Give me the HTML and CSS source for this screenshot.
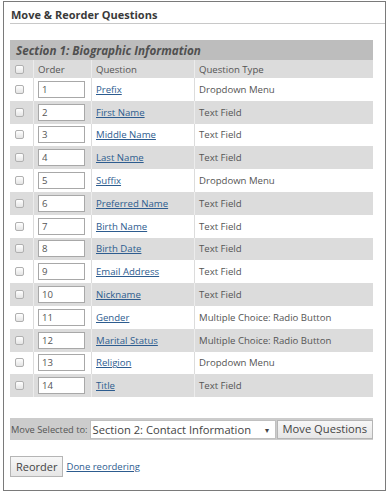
FILE: index.html
```html
<!DOCTYPE html>
<html lang="en">
<head>
  <meta charset="UTF-8" />
  <title>Move &amp; Reorder Questions</title>
  <link rel="stylesheet" href="styles.css">
</head>
<body>
  <div class="panel">
    <h2 class="panel-title">Move &amp; Reorder Questions</h2>
    <table class="q-table">
      <thead>
        <tr class="section-row"><th colspan="4">Section 1: Biographic Information</th></tr>
        <tr class="head-row">
          <th class="col-check"><input type="checkbox" class="cb" /></th>
          <th class="col-order">Order</th>
          <th class="col-question">Question</th>
          <th>Question Type</th>
        </tr>
      </thead>
      <tbody>
        <tr><td class="col-check"><input type="checkbox" class="cb" /></td><td><input class="order-input" value="1" /></td><td><a href="#">Prefix</a></td><td>Dropdown Menu</td></tr>
        <tr><td class="col-check"><input type="checkbox" class="cb" /></td><td><input class="order-input" value="2" /></td><td><a href="#">First Name</a></td><td>Text Field</td></tr>
        <tr><td class="col-check"><input type="checkbox" class="cb" /></td><td><input class="order-input" value="3" /></td><td><a href="#">Middle Name</a></td><td>Text Field</td></tr>
        <tr><td class="col-check"><input type="checkbox" class="cb" /></td><td><input class="order-input" value="4" /></td><td><a href="#">Last Name</a></td><td>Text Field</td></tr>
        <tr><td class="col-check"><input type="checkbox" class="cb" /></td><td><input class="order-input" value="5" /></td><td><a href="#">Suffix</a></td><td>Dropdown Menu</td></tr>
        <tr><td class="col-check"><input type="checkbox" class="cb" /></td><td><input class="order-input" value="6" /></td><td><a href="#">Preferred Name</a></td><td>Text Field</td></tr>
        <tr><td class="col-check"><input type="checkbox" class="cb" /></td><td><input class="order-input" value="7" /></td><td><a href="#">Birth Name</a></td><td>Text Field</td></tr>
        <tr><td class="col-check"><input type="checkbox" class="cb" /></td><td><input class="order-input" value="8" /></td><td><a href="#">Birth Date</a></td><td>Text Field</td></tr>
        <tr><td class="col-check"><input type="checkbox" class="cb" /></td><td><input class="order-input" value="9" /></td><td><a href="#">Email Address</a></td><td>Text Field</td></tr>
        <tr><td class="col-check"><input type="checkbox" class="cb" /></td><td><input class="order-input" value="10" /></td><td><a href="#">Nickname</a></td><td>Text Field</td></tr>
        <tr><td class="col-check"><input type="checkbox" class="cb" /></td><td><input class="order-input" value="11" /></td><td><a href="#">Gender</a></td><td>Multiple Choice: Radio Button</td></tr>
        <tr><td class="col-check"><input type="checkbox" class="cb" /></td><td><input class="order-input" value="12" /></td><td><a href="#">Marital Status</a></td><td>Multiple Choice: Radio Button</td></tr>
        <tr><td class="col-check"><input type="checkbox" class="cb" /></td><td><input class="order-input" value="13" /></td><td><a href="#">Religion</a></td><td>Dropdown Menu</td></tr>
        <tr><td class="col-check"><input type="checkbox" class="cb" /></td><td><input class="order-input" value="14" /></td><td><a href="#">Title</a></td><td>Text Field</td></tr>
      </tbody>
    </table>

    <div class="move-bar">
      <span class="move-label">Move Selected to:</span>
      <div class="select-box">
        <span>Section 2: Contact Information</span>
        <span class="select-arrow">&#9662;</span>
      </div>
      <button class="btn move-btn">Move Questions</button>
    </div>

    <div class="footer">
      <button class="btn reorder-btn">Reorder</button>
      <a href="#" class="done-link">Done reordering</a>
    </div>
  </div>
</body>
</html>
```

FILE: styles.css
```css
body {
  margin: 0;
  background: #ffffff;
  font-family: "Open Sans", "Liberation Sans", sans-serif;
  color: #555555;
}
.panel {
  margin: 1px 0 0 3px;
  width: 383px;
  height: 490px;
  border: 1px solid #7a7a7a;
  padding-left: 6px;
  box-sizing: border-box;
}
.panel-title {
  margin: 0;
  padding: 6px 0 2px 1px;
  font-size: 11px;
  font-weight: 700;
  color: #3a3a3a;
  border-bottom: 1px solid #c8c8c8;
  line-height: 13px;
}
.q-table {
  margin-top: 16px;
  width: 363px;
  border-collapse: collapse;
  font-size: 9.6px;
}
.q-table th,
.q-table td {
  text-align: left;
  padding: 0 0 0 4px;
  height: 22.8px;
  border-left: 1px solid #dcdcdc;
  font-weight: 400;
}
.q-table tbody tr:nth-child(even) td {
  background: #dcdcdc;
  border-left-color: #ececec;
}
.section-row th {
  background: #bdbdbd;
  height: 20px;
  font-size: 11.7px;
  font-weight: 700;
  font-style: italic;
  color: #505050;
  padding-left: 6px;
  border-left: none;
}
.head-row th {
  background: #dcdcdc;
  height: 18px;
  border-left-color: #ececec;
}
.q-table .col-check {
  width: 18px;
  border-left: none;
  padding-left: 5px;
}
.col-order {
  width: 53px;
}
.col-question {
  width: 98px;
}
.cb {
  appearance: none;
  display: block;
  margin: 0;
  width: 9px;
  height: 9px;
  border: 1px solid #b0b0b0;
  border-radius: 2px;
  background: linear-gradient(#ffffff, #e4e4e4);
}
.order-input {
  display: block;
  width: 47px;
  height: 17px;
  box-sizing: border-box;
  border: 1px solid #a8a8a8;
  padding: 0 3px;
  font-family: inherit;
  font-size: 9.6px;
  color: #555555;
}
.q-table a {
  color: #2d5c8f;
}
.move-bar {
  margin-top: 21px;
  width: 363px;
  height: 22px;
  background: #cccccc;
  display: flex;
  align-items: center;
  box-sizing: border-box;
}
.move-label {
  font-size: 9.3px;
  color: #555555;
  padding-left: 1px;
  white-space: nowrap;
}
.select-box {
  margin-left: 2px;
  width: 186px;
  height: 19px;
  background: #ffffff;
  border: 1px solid #c0c0c0;
  box-sizing: border-box;
  display: flex;
  align-items: center;
  justify-content: space-between;
  padding: 0 6px 0 2px;
  font-size: 11.2px;
  color: #444444;
  white-space: nowrap;
}
.select-arrow {
  font-size: 8px;
}
.btn {
  font-family: inherit;
  background: linear-gradient(#f7f7f7, #e6e6e6);
  border: 1px solid #b5b5b5;
  color: #444444;
  cursor: pointer;
  white-space: nowrap;
}
.move-btn {
  margin-left: 1px;
  height: 19px;
  padding: 0 5px;
  font-size: 11.2px;
  line-height: 16px;
}
.footer {
  margin-top: 16px;
  display: flex;
  align-items: center;
  gap: 3px;
}
.reorder-btn {
  height: 21px;
  padding: 0 5px;
  font-size: 11px;
}
.done-link {
  font-size: 9.5px;
  color: #2d5c8f;
}
```
